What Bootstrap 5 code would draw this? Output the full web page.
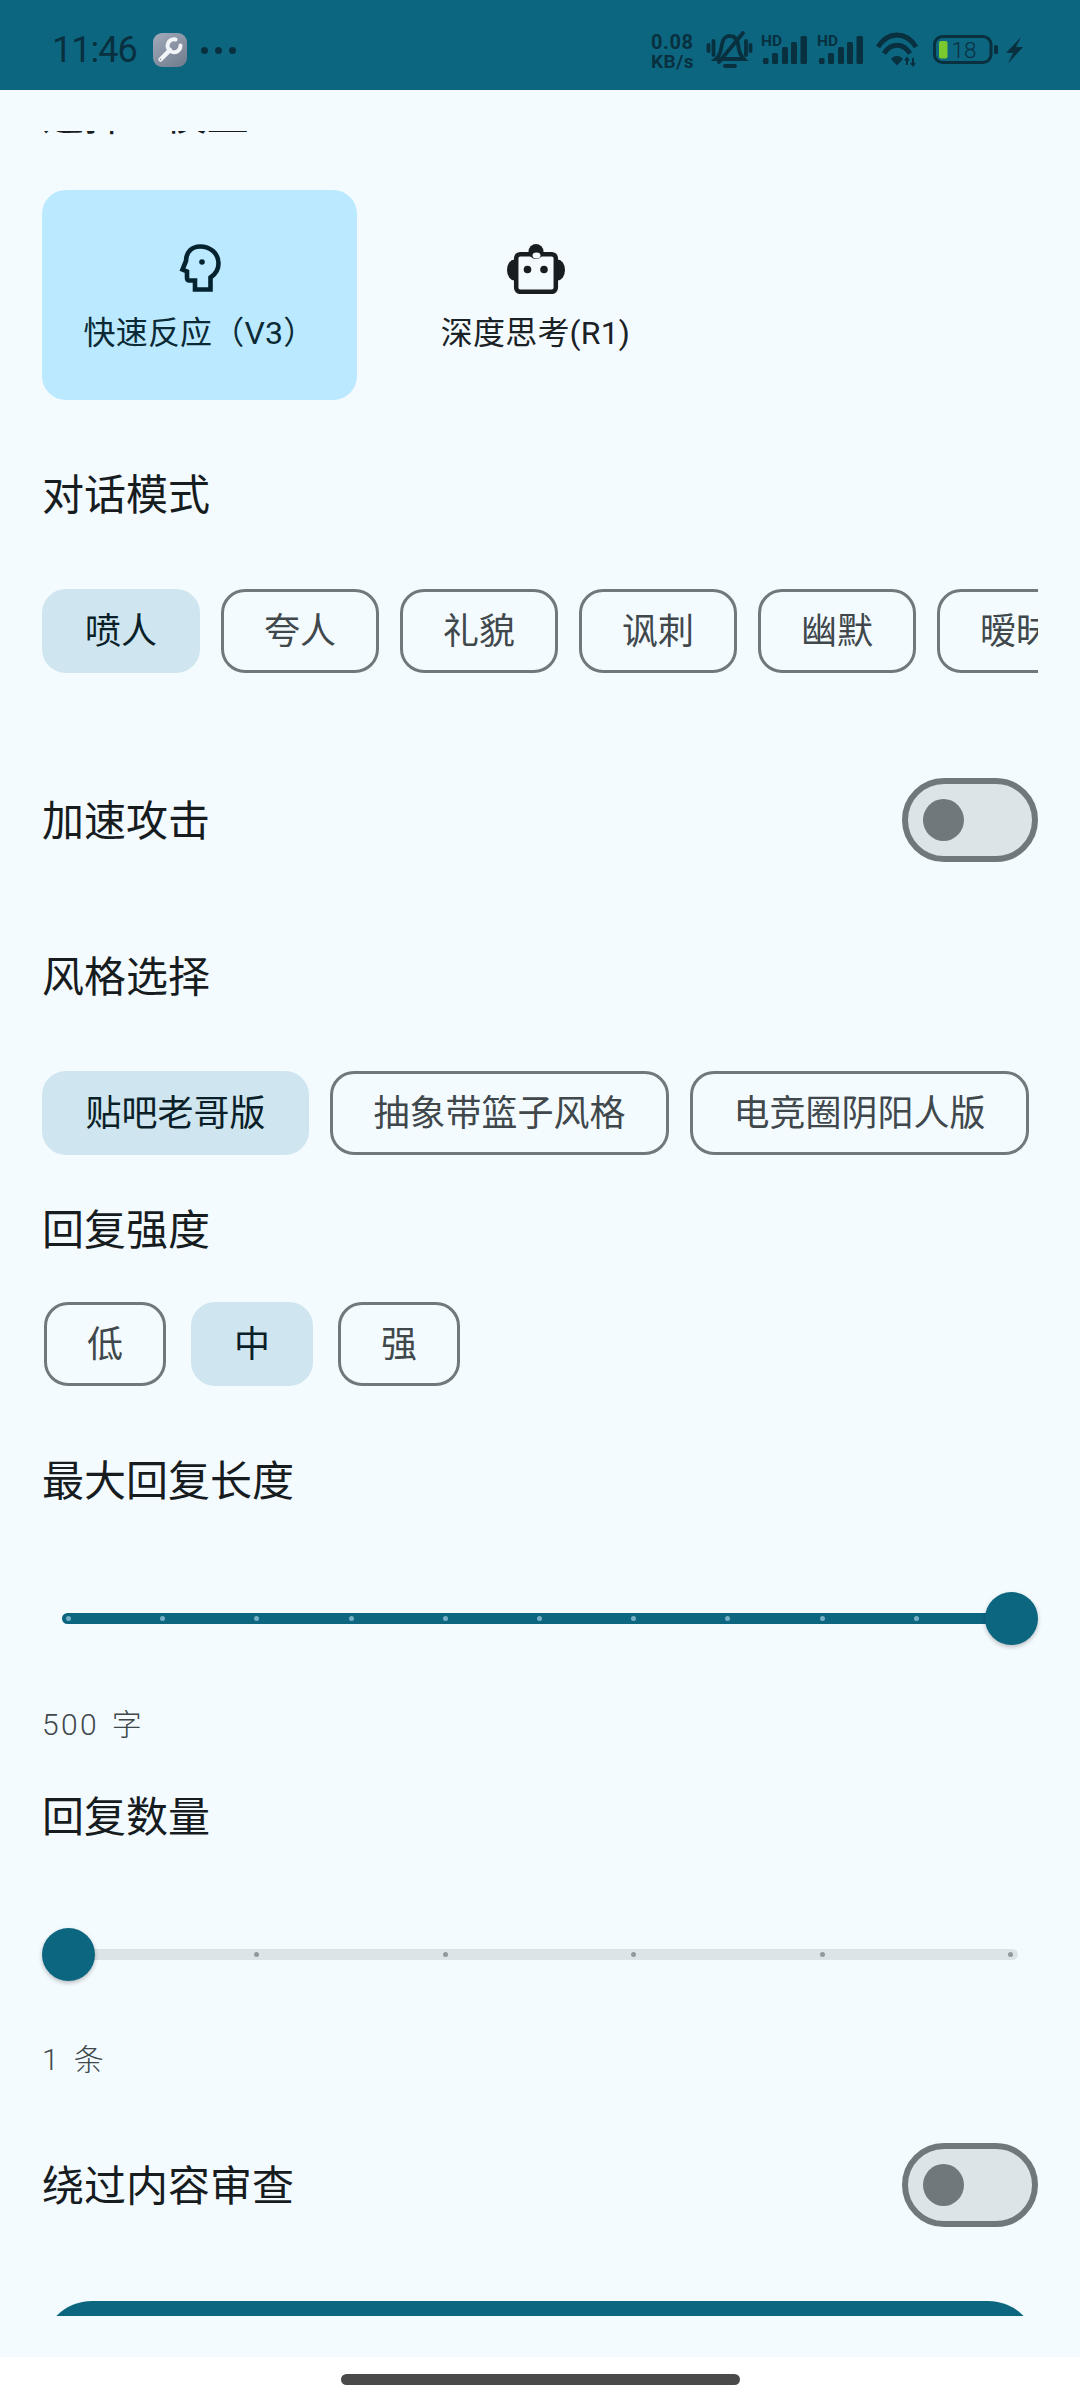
<!DOCTYPE html>
<html lang="zh-CN">
<head>
  <meta charset="UTF-8">
  <title>设置</title>
  <link href="https://cdn.jsdelivr.net/npm/bootstrap@5.3.0/dist/css/bootstrap.min.css" rel="stylesheet">
  <style>
    html, body { margin: 0; height: 2400px; background: #fff; }
    body { font-family: Roboto, "Noto Sans CJK SC", sans-serif; width: 1080px; overflow: hidden; }
    .status-bar { height: 90px; background: #0d6680; color: #08303f; padding-left: 52px; padding-top: 10px; }
    .status-time { font-size: 36px; line-height: 1; letter-spacing: -1px; font-weight: 400; width: 101px; flex: none; }
    .tool-tile { width: 34px; height: 34px; border-radius: 9px; background: linear-gradient(145deg, #a2abba, #6f7a8c); }
    .status-dots { margin-left: 14px; gap: 7px; }
    .status-dots i { width: 7px; height: 7px; border-radius: 50%; background: #08303f; display: block; }
    .status-icons { margin-left: auto; }
    .screen { height: 2267px; background: #f4fbff; padding-top: 41px; }
    .scroll-area { height: 2185px; padding: 0 42px; }
    .sec-label { height: 56px; line-height: 59px; font-size: 42px; color: #171c1f; }
    .first-label { margin-top: -45px; margin-bottom: 48px; }
    .sec-value { height: 40px; line-height: 40px; font-size: 30px; font-weight: 300; color: #40484c; letter-spacing: 2.4px; word-spacing: 3px; }
    .model-card { width: 315px; height: 210px; border-radius: 24px; color: #1a2226; font-size: 32px; letter-spacing: .2px; padding-top: 54px; }
    .model-card svg { display: block; height: 50px; margin-bottom: 15px; }
    .model-on { background: #bbe9ff; color: #0b2a36; }
    .opt-row { gap: 21px; }
    .opt-chip { height: 84px; padding: 2px 0 0; border: 3px solid #70787c; border-radius: 24px; font-size: 36px; line-height: 1; color: #40484c; background: transparent; flex: none; }
    .opt-on, .opt-chip.opt-on { background: #cfe5ef; border-color: #cfe5ef; color: #0b1f28; }
    .w-mode { width: 158px; }
    .w-s1 { width: 267px; }
    .w-s2 { width: 339px; }
    .w-s3 { width: 339px; }
    .w-lvl { width: 122px; }
    .lvl-row { padding-left: 2px; gap: 25px; }
    .toggle-off { width: 136px; height: 84px; border: 6px solid #70787c; border-radius: 42px; background: #dce4e8; padding-left: 15px; }
    .toggle-off i { width: 41px; height: 42px; border-radius: 50%; background: #70787c; display: block; }
    .slider-box { height: 53px; position: relative; }
    .slider-track { position: absolute; left: 20px; right: 20px; top: 21px; height: 11px; border-radius: 6px; background: #dce4e8; padding: 0 5px 0 4px; }
    .slider-track i { width: 5px; height: 5px; border-radius: 50%; background: #8f9a9e; display: block; }
    .track-on { background: #0d6680; }
    .track-on i { background: #74aec4; }
    .slider-thumb { position: absolute; top: 0; width: 53px; height: 53px; border-radius: 50%; background: #0d6680; box-shadow: 0 2px 4px rgba(0, 0, 0, .25); }
    .thumb-end { right: 0; }
    .thumb-start { left: 0; }
    .send-btn { height: 100px; border-radius: 50px; background: #0d6680; border: 0; }
    .nav-strip { height: 43px; background: #fff; padding-top: 17px; }
    .home-pill { width: 399px; height: 11px; border-radius: 6px; background: #4a4a4a; }
    .mt-45 { margin-top: 45px; }
    .mt-46 { margin-top: 46px; }
    .mt-66 { margin-top: 66px; }
    .mt-67 { margin-top: 67px; }
    .mt-105 { margin-top: 105px; }
    .mt-86 { margin-top: 86px; }
    .mt-84 { margin-top: 84px; }
    .mt-60 { margin-top: 60px; }
    .mt-43 { margin-top: 43px; }
    .mt-59 { margin-top: 59px; }
    .mt-63 { margin-top: 63px; }
    .mt-74 { margin-top: 74px; }
  </style>
</head>
<body>
  <div class="status-bar d-flex align-items-center">
    <div class="status-time">11:46</div>
    <div class="tool-tile flex-shrink-0">
      <svg width="34" height="34" viewBox="0 0 34 34" fill="none" stroke="#f2f5f8" stroke-linecap="round">
        <path d="M7.5 26.5 L17 17" stroke-width="4.5"/>
        <path d="M22.5 6.5 A6.5 6.5 0 1 0 27.5 12.5" stroke-width="4"/>
        <circle cx="7.5" cy="26.5" r="0.8" fill="#7d8797" stroke="none"/>
      </svg>
    </div>
    <div class="status-dots d-flex">
      <i></i><i></i><i></i>
    </div>
    <svg class="status-icons" width="429" height="50" viewBox="651 25 429 50" fill="#08303f" font-family="Roboto, sans-serif">
      <text x="651" y="49" font-size="20" font-weight="700" letter-spacing="0.6">0.08</text>
      <text x="651" y="67.5" font-size="19" font-weight="700" letter-spacing="0.5">KB/s</text>

      <g fill="none" stroke="#08303f" stroke-linecap="round" stroke-width="3.8">
        <path d="M716 59 C721 55 721 49 722 44 C723 38 727 35.5 731 36 C736 36.5 738 41 738.5 47 C739 52 741 56 744 59 Z"/>
        <path d="M725 66 L735 66"/>
        <path d="M719 62 L743 33"/>
        <path d="M713.5 41 V55 M708.5 45 V51 M746 41 V55 M750.5 45 V51"/>
      </g>

      <g id="sig">
        <text x="761" y="45.5" font-size="15.5" font-weight="700">HD</text>
        <rect x="763" y="58" width="5.5" height="6" rx="1.5"/>
        <rect x="772" y="53" width="6" height="11" rx="1.5"/>
        <rect x="782" y="47" width="6" height="17" rx="1.5"/>
        <rect x="791" y="42" width="6" height="22" rx="1.5"/>
        <rect x="800.5" y="36" width="6.5" height="28" rx="1.5"/>
      </g>
      <use href="#sig" x="56"/>

      <g fill="none" stroke="#08303f" stroke-width="5">
        <path d="M878 47 C888 31 906 31 916 47"/>
        <path d="M884 53.5 C891 42.5 903 42.5 910 53.5"/>
      </g>
      <path d="M891 59 C894 55 900 55 903 59 L897 65.5 Z"/>
      <path d="M907 65 V60 M905 60.5 L907 58 L909 60.5 M913 58 V64 M911 63 L913 65.5 L915 63" fill="none" stroke="#08303f" stroke-width="2"/>

      <rect x="934.5" y="36.5" width="56.5" height="26" rx="8" fill="none" stroke="#08303f" stroke-width="3"/>
      <rect x="939" y="41" width="8.5" height="17.5" rx="2" fill="#7ac92f"/>
      <text x="951.5" y="58" font-size="22.5" font-weight="300">18</text>
      <rect x="994" y="45" width="4" height="9" rx="1.5"/>
      <path d="M1021 37 L1006 53 L1013 53 L1008 63.5 L1023 47 L1016 47 Z"/>
    </svg>
  </div>

  <div class="screen">
    <div class="scroll-area overflow-hidden">
      <div class="sec-label first-label">选择AI模型</div>

      <div class="d-flex opt-row">
        <div class="model-card model-on d-flex flex-column align-items-center flex-shrink-0">
          <svg width="42" height="50" viewBox="0 0 42 50" fill="none">
            <path d="M7 17 C7 8 13 2.5 21 2.5 C31 2.5 39.5 9 39.5 19.5 C39.5 26 36 30.5 31.5 33.5 L31.5 45.5 L16 45.5 L16 36.5 L10.5 36.5 C9 36.5 8 35.5 8 34 L8 27.5 L3.5 25.5 Z" stroke="#04232f" stroke-width="4.6" stroke-linejoin="miter"/>
            <circle cx="23" cy="18" r="2.8" fill="#04232f"/>
          </svg>
          <div>快速反应（V3）</div>
        </div>
        <div class="model-card d-flex flex-column align-items-center flex-shrink-0">
          <svg width="58" height="50" viewBox="0 0 58 50">
            <ellipse cx="7.5" cy="26" rx="7.5" ry="10.5" fill="#181d20"/>
            <ellipse cx="50.5" cy="26" rx="7.5" ry="10.5" fill="#181d20"/>
            <rect x="9.2" y="10.2" width="39.6" height="37.6" rx="4" fill="#f4fbff" stroke="#181d20" stroke-width="4.5"/>
            <circle cx="29" cy="7.5" r="7.5" fill="#181d20"/>
            <ellipse cx="29.5" cy="11.5" rx="4" ry="3" fill="#f4fbff"/>
            <circle cx="20.5" cy="25.5" r="3.8" fill="#181d20"/>
            <circle cx="37" cy="25.5" r="3.8" fill="#181d20"/>
          </svg>
          <div>深度思考(R1)</div>
        </div>
      </div>

      <div class="sec-label mt-66">对话模式</div>
      <div class="d-flex opt-row mt-67 overflow-hidden">
        <button class="btn opt-chip opt-on w-mode">喷人</button>
        <button class="btn opt-chip w-mode">夸人</button>
        <button class="btn opt-chip w-mode">礼貌</button>
        <button class="btn opt-chip w-mode">讽刺</button>
        <button class="btn opt-chip w-mode">幽默</button>
        <button class="btn opt-chip w-mode">暧昧</button>
      </div>

      <div class="d-flex justify-content-between align-items-center mt-105">
        <div class="sec-label">加速攻击</div>
        <div class="toggle-off d-flex align-items-center"><i></i></div>
      </div>

      <div class="sec-label mt-86">风格选择</div>
      <div class="d-flex opt-row mt-67">
        <button class="btn opt-chip opt-on w-s1">贴吧老哥版</button>
        <button class="btn opt-chip w-s2">抽象带篮子风格</button>
        <button class="btn opt-chip w-s3">电竞圈阴阳人版</button>
      </div>

      <div class="sec-label mt-46">回复强度</div>
      <div class="d-flex lvl-row mt-45">
        <button class="btn opt-chip w-lvl">低</button>
        <button class="btn opt-chip opt-on w-lvl">中</button>
        <button class="btn opt-chip w-lvl">强</button>
      </div>

      <div class="sec-label mt-66">最大回复长度</div>
      <div class="slider-box mt-84">
        <div class="slider-track track-on d-flex justify-content-between align-items-center">
          <i></i><i></i><i></i><i></i><i></i><i></i><i></i><i></i><i></i><i></i><i></i>
        </div>
        <div class="slider-thumb thumb-end"></div>
      </div>
      <div class="sec-value mt-60">500 字</div>

      <div class="sec-label mt-43">回复数量</div>
      <div class="slider-box mt-84">
        <div class="slider-track d-flex justify-content-between align-items-center">
          <i></i><i></i><i></i><i></i><i></i><i></i>
        </div>
        <div class="slider-thumb thumb-start"></div>
      </div>
      <div class="sec-value mt-59">1 条</div>

      <div class="d-flex justify-content-between align-items-center mt-63">
        <div class="sec-label">绕过内容审查</div>
        <div class="toggle-off d-flex align-items-center"><i></i></div>
      </div>

      <button class="btn send-btn w-100 mt-74"></button>
    </div>
  </div>

  <div class="nav-strip d-flex justify-content-center">
    <div class="home-pill"></div>
  </div>
</body>
</html>
